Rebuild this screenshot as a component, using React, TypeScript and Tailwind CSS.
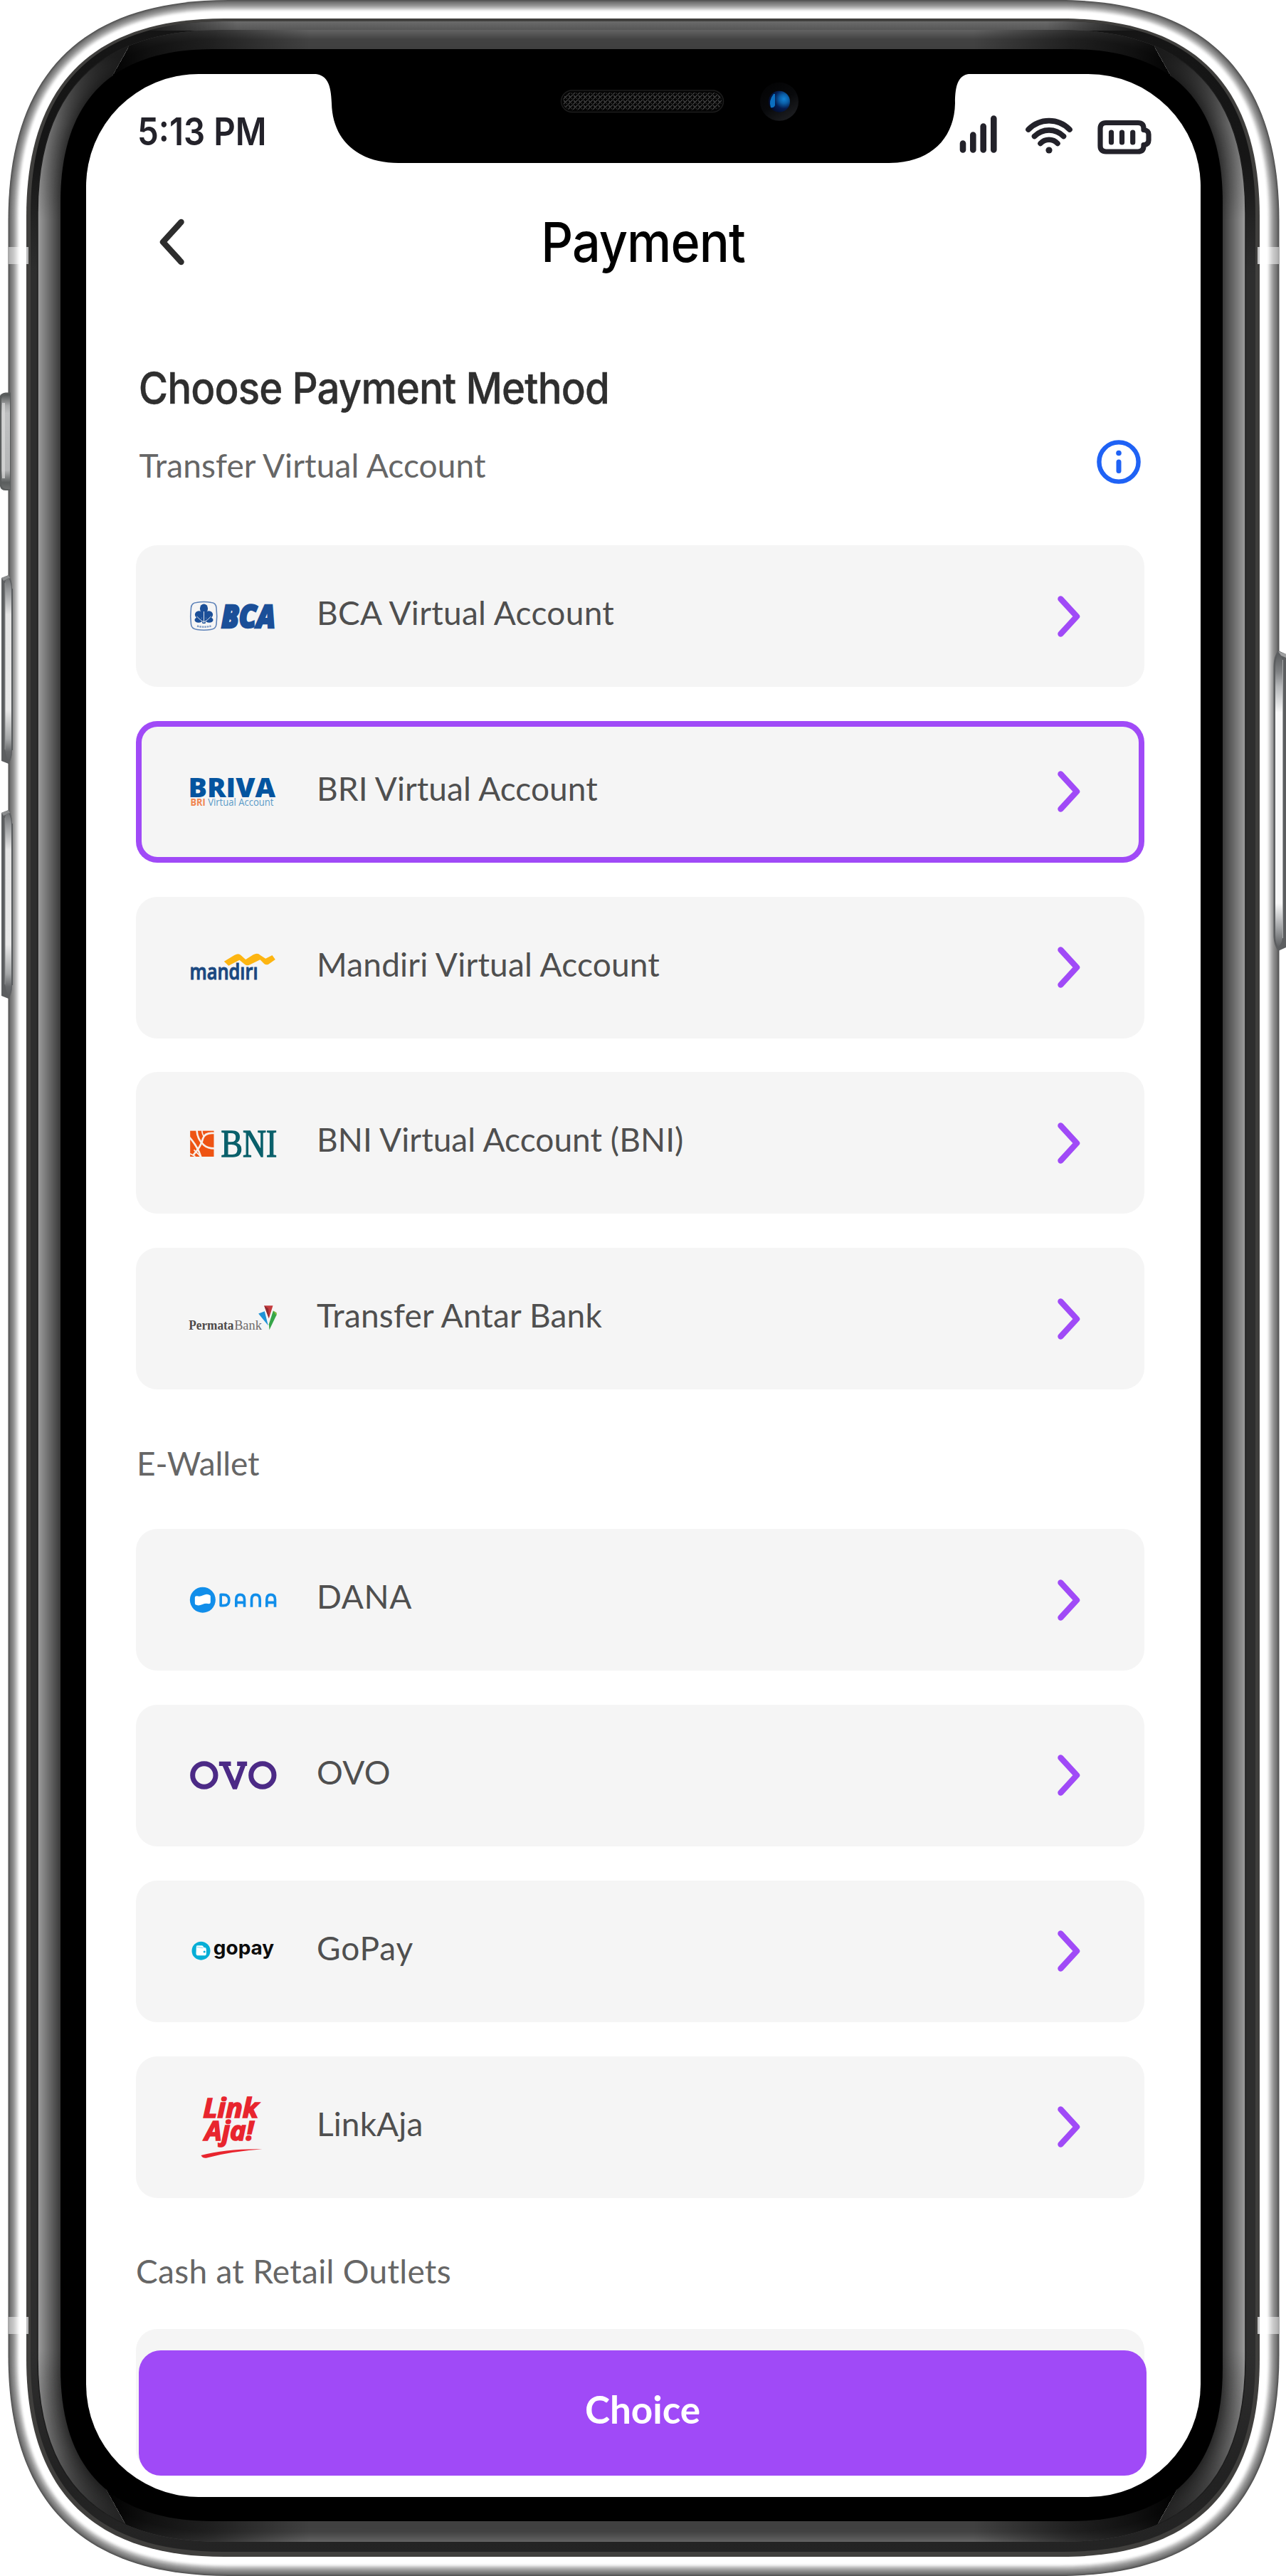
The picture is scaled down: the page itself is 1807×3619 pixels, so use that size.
import React from 'react';
import type { ReactNode } from 'react';

/* ---------- Device frame ---------- */

type Box = { l: number; t: number; r: number; b: number; c: number };

const RIM_OUTER: Box = { l: 11.5, t: 0, r: 1797.5, b: 3619, c: 310 };
const RIM_INNER: Box = { l: 37, t: 26, r: 1770, b: 3592, c: 278 };
const BAND: Box = { l: 43, t: 30, r: 1764, b: 3585, c: 270 };
const BEVEL_OUTER: Box = { l: 53, t: 42, r: 1750, b: 3571, c: 257 };
const BEVEL_INNER: Box = { l: 85, t: 69, r: 1718, b: 3542, c: 215 };

/** Rectangle with continuous (superelliptic) corners. */
function smooth({ l, t, r, b, c }: Box) {
  const k = c * 0.335;
  return [
    `M${l} ${t + c}`,
    `C${l} ${t + k} ${l + k} ${t} ${l + c} ${t}`,
    `H${r - c}`,
    `C${r - k} ${t} ${r} ${t + k} ${r} ${t + c}`,
    `V${b - c}`,
    `C${r} ${b - k} ${r - k} ${b} ${r - c} ${b}`,
    `H${l + c}`,
    `C${l + k} ${b} ${l} ${b - k} ${l} ${b - c}Z`,
  ].join(' ');
}

function mix(a: Box, b: Box, p: number): Box {
  const m = (x: number, y: number) => x + (y - x) * p;
  return { l: m(a.l, b.l), t: m(a.t, b.t), r: m(a.r, b.r), b: m(a.b, b.b), c: m(a.c, b.c) };
}

function tone(stops: [number, number][], p: number) {
  let v = stops[stops.length - 1][1];
  for (let i = 1; i < stops.length; i++) {
    if (p <= stops[i][0]) {
      const [p0, v0] = stops[i - 1];
      const [p1, v1] = stops[i];
      v = v0 + ((v1 - v0) * (p - p0)) / (p1 - p0);
      break;
    }
  }
  const n = Math.round(v);
  return `rgb(${n},${n},${n})`;
}

function Rings({ from, to, n, stops }: { from: Box; to: Box; n: number; stops: [number, number][] }) {
  return (
    <>
      {Array.from({ length: n }, (_, i) => (
        <path key={i} d={smooth(mix(from, to, i / n))} fill={tone(stops, i / (n - 1))} />
      ))}
    </>
  );
}

const SIDE_CLIP = 'M0 0H190L180 67L153 115L125 165L100 300V3320L125 3450L152 3503L176 3546L190 3619H0Z';

function SideBevel() {
  return (
    <g clipPath="url(#side)">
      <Rings from={BEVEL_OUTER} to={BEVEL_INNER} n={32} stops={[[0, 156], [1, 58]]} />
      <g clipPath="url(#bevel)">
        <rect x="40" y="40" width="160" height="270" fill="url(#fadeDown)" />
        <rect x="40" y="3300" width="160" height="280" fill="url(#fadeUp)" />
      </g>
      <path d={smooth(BEVEL_OUTER)} fill="none" stroke="#1c1c1c" strokeWidth="1.5" />
    </g>
  );
}

function VolumeKey({ y }: { y: number }) {
  return (
    <g transform={`translate(0 ${y})`}>
      <path d="M2 5L12 1Q17 8 17 20V247Q17 259 12 266L2 262Z" fill="#5c5e60" />
      <path d="M2 5L12 1L14 5L5 9Z" fill="#8c8e8f" />
      <path d="M7 12Q7 7 12 5Q16 12 16 22V246Q16 256 12 262Q7 252 7 244Z" fill="url(#key)" />
      <path d="M7 12V246" stroke="#8b8d8e" strokeWidth="1" />
      <path d="M17.2 20V247" stroke="#55585a" strokeWidth="1.5" />
    </g>
  );
}

function DeviceFrame() {
  return (
    <svg className="absolute inset-0" width="1807" height="3619" viewBox="0 0 1807 3619">
      <defs>
        <clipPath id="side"><path d={SIDE_CLIP} /></clipPath>
        <clipPath id="band"><path d={smooth(BAND)} /></clipPath>
        <clipPath id="bevel"><path d={smooth(BEVEL_OUTER)} /></clipPath>
        <linearGradient id="fadeDown" x2="0" y2="1">
          <stop offset="0" stopColor="#111" /><stop offset=".15" stopColor="#111" stopOpacity=".9" />
          <stop offset=".5" stopColor="#111" stopOpacity=".35" /><stop offset="1" stopColor="#111" stopOpacity="0" />
        </linearGradient>
        <linearGradient id="fadeUp" x2="0" y2="1">
          <stop offset="0" stopColor="#111" stopOpacity="0" /><stop offset=".5" stopColor="#111" stopOpacity=".4" />
          <stop offset=".85" stopColor="#111" stopOpacity=".85" /><stop offset="1" stopColor="#111" stopOpacity=".9" />
        </linearGradient>
        <linearGradient id="ends" gradientUnits="userSpaceOnUse" x1="150" x2="1653" y1="0" y2="0">
          <stop offset="0" stopColor="#000" /><stop offset=".04" stopColor="#000" stopOpacity=".75" />
          <stop offset=".1" stopColor="#000" stopOpacity=".5" /><stop offset=".19" stopColor="#000" stopOpacity="0" />
          <stop offset=".81" stopColor="#000" stopOpacity="0" /><stop offset=".9" stopColor="#000" stopOpacity=".5" />
          <stop offset=".96" stopColor="#000" stopOpacity=".75" /><stop offset="1" stopColor="#000" />
        </linearGradient>
        <linearGradient id="bandTone" x2="0" y2="1">
          <stop offset="0" stopColor="#151515" /><stop offset=".055" stopColor="#161616" />
          <stop offset=".1" stopColor="#2e2e2e" /><stop offset=".92" stopColor="#2e2e2e" />
          <stop offset=".97" stopColor="#222" /><stop offset="1" stopColor="#242424" />
        </linearGradient>
        <linearGradient id="topLight" x2="0" y2="1">
          <stop offset="0" stopColor="#6b6b6b" /><stop offset="1" stopColor="#545454" />
        </linearGradient>
        <linearGradient id="topMaskTone" gradientUnits="userSpaceOnUse" x1="190" x2="1613" y1="0" y2="0">
          <stop offset="0" stopColor="#000" /><stop offset=".1" stopColor="#fff" />
          <stop offset=".9" stopColor="#fff" /><stop offset="1" stopColor="#000" />
        </linearGradient>
        <mask id="topMask" maskUnits="userSpaceOnUse" x="0" y="0" width="1807" height="100">
          <rect width="1807" height="100" fill="url(#topMaskTone)" />
        </mask>
        <linearGradient id="key" x2="0" y2="1">
          <stop offset="0" stopColor="#6c6e70" /><stop offset=".06" stopColor="#939597" />
          <stop offset=".2" stopColor="#e4e4e4" /><stop offset=".72" stopColor="#e8e8e8" />
          <stop offset=".88" stopColor="#a4a6a7" /><stop offset=".95" stopColor="#66686a" /><stop offset="1" stopColor="#5c5e60" />
        </linearGradient>
        <linearGradient id="mute" x2="0" y2="1">
          <stop offset="0" stopColor="#515454" /><stop offset=".12" stopColor="#a8a9aa" /><stop offset=".2" stopColor="#bfc0c1" />
          <stop offset=".8" stopColor="#b5b6b7" /><stop offset=".93" stopColor="#5a5d5d" /><stop offset="1" stopColor="#6b6d6d" />
        </linearGradient>
        <linearGradient id="power" x2="0" y2="1">
          <stop offset="0" stopColor="#5c5e60" /><stop offset=".06" stopColor="#808284" /><stop offset=".11" stopColor="#b5b7b9" />
          <stop offset=".2" stopColor="#f8f8f8" /><stop offset=".85" stopColor="#f8f8f8" /><stop offset=".93" stopColor="#a5a7a9" />
          <stop offset="1" stopColor="#5c5e60" />
        </linearGradient>
      </defs>

      {/* metal rim */}
      <Rings from={RIM_OUTER} to={RIM_INNER} n={26} stops={[[0, 82], [0.1, 112], [0.3, 150], [0.45, 195], [0.58, 242], [0.66, 255], [1, 255]]} />
      <path d={smooth(RIM_INNER)} fill="#403f3d" />
      <path d={smooth(BAND)} fill="url(#bandTone)" />
      <g clipPath="url(#band)">
        <rect x="180" y="30" width="1443" height="13" fill="url(#topLight)" mask="url(#topMask)" />
      </g>

      {/* top and bottom bevel */}
      <Rings from={BEVEL_OUTER} to={BEVEL_INNER} n={27} stops={[[0, 98], [0.5, 66], [1, 64]]} />
      <path d={smooth(BEVEL_OUTER)} fill="url(#ends)" />
      <SideBevel />
      <g transform="translate(1803 0) scale(-1 1)"><SideBevel /></g>
      <path d={smooth(BEVEL_INNER)} fill="#000" />

      {/* antenna lines */}
      {[347, 3255].map((y) => (
        <g key={y} fill="#fff">
          <rect x="12" y={y} width="25" height="24" fillOpacity=".5" />
          <rect x="37" y={y} width="3" height="24" fill="#b9b9b9" />
          <rect x="1770" y={y} width="27" height="24" fillOpacity=".5" />
          <rect x="1767" y={y} width="3" height="24" fill="#c6c6c6" />
        </g>
      ))}

      {/* mute switch */}
      <path d="M0 556Q2 552 8 551.5H15V689H8Q1 689 0 683Z" fill="#5a5d5d" />
      <path d="M2 560Q4 555 8 554H14V687H8Q3 686 2 681Z" fill="url(#mute)" />
      <path d="M3 566H7V672H3Z" fill="#dadada" fillOpacity=".7" />

      <VolumeKey y={807} />
      <VolumeKey y={1137} />

      {/* power key */}
      <path d="M1807 919L1796 914Q1789.500 922 1789.500 936V1316Q1790 1328 1796 1336L1807 1331Z" fill="#5c5e60" />
      <path d="M1796 915L1807 919V924L1800 921Z" fill="#a0a1a2" />
      <path d="M1802 927Q1800 920 1796 919Q1792 926 1792 938V1314Q1792 1325 1796 1331Q1801 1326 1802 1318Z" fill="url(#power)" />
      <path d="M1802.500 927V1318" stroke="#a5a7a8" />
    </svg>
  );
}

function Notch() {
  return (
    <svg className="absolute left-0 top-0" width="1807" height="240" viewBox="0 0 1807 240">
      <defs>
        <pattern id="mesh" width="7" height="7" patternUnits="userSpaceOnUse">
          <path d="M0 7L7 0M1 1L3 3" stroke="#4c4c4c" strokeWidth="1.1" />
          <path d="M4.500 4.500L6 6" stroke="#333" strokeWidth="1.1" />
        </pattern>
        <radialGradient id="lens" cx=".72" cy=".38" r=".75">
          <stop offset="0" stopColor="#1283d6" /><stop offset=".28" stopColor="#0b5fa8" />
          <stop offset=".6" stopColor="#041c50" /><stop offset="1" stopColor="#020b2b" />
        </radialGradient>
        <linearGradient id="housing" x1="0" y1="0" x2=".6" y2="1">
          <stop offset="0" stopColor="#020203" /><stop offset=".6" stopColor="#08090b" /><stop offset="1" stopColor="#1b1c1f" />
        </linearGradient>
      </defs>
      <path d="M430 90V103.500H438C460 103.500 465 118 466 145C467 196 502 229 560 229H1249C1306 229 1341 196 1342 145C1342 118 1347 103.500 1366 103.500H1375V90Z" fill="#000" />
      <rect x="788.500" y="127" width="228" height="30.500" rx="15.250" fill="#050505" stroke="#1d1d1d" strokeWidth="1.500" />
      <rect x="791" y="130" width="223" height="24.500" rx="12.250" fill="url(#mesh)" />
      <circle cx="1095" cy="142.700" r="27" fill="url(#housing)" />
      <circle cx="1095" cy="142.700" r="15" fill="url(#lens)" />
      <path d="M1087 132Q1079.500 142 1083 151Q1087 152 1089 148V132Z" fill="#0b6fc0" />
    </svg>
  );
}

/* ---------- Status bar ---------- */

function SignalIcon() {
  return (
    <svg width="54" height="54" viewBox="0 0 54 54" stroke="#23222a" strokeWidth="8.600" strokeLinecap="round">
      <path d="M5 39.500V48.500M19.300 27.500V48.500M33.700 15.500V48.500M48.300 4.500V48.500" />
    </svg>
  );
}

function WifiIcon() {
  return (
    <svg width="66" height="54" viewBox="0 0 66 54" fill="none" stroke="#23222a" strokeWidth="7.600" strokeLinecap="round">
      <path d="M4 20C20 3.500 46 3.500 62 20" />
      <path d="M12.500 29.500C24 18 42 18 53.500 29.500" />
      <path d="M21 39.500C27.500 32.500 38.500 32.500 45 39.500" />
      <circle cx="33" cy="49" r="4.600" fill="#23222a" stroke="none" />
    </svg>
  );
}

function BatteryIcon() {
  return (
    <svg width="76" height="50" viewBox="0 0 76 50" fill="none" stroke="#23222a" strokeWidth="7.200" strokeLinecap="round" strokeLinejoin="round">
      <path d="M12 4.500H57Q65 4.500 65 12.500V14.500Q72 15 72 21V29Q72 35 65 35.500V37Q65 45 57 45H12Q4 45 4 37V12.500Q4 4.500 12 4.500Z" />
      <path d="M19.500 18V32M34.500 18V32M49.700 18V32" />
    </svg>
  );
}

function StatusBar() {
  return (
    <div className="flex h-[125px] items-start justify-between pl-[72px] pr-[69px] pt-[55px]">
      <span className="w-[190px] origin-left scale-x-[0.895] whitespace-nowrap font-['Inter'] text-[53px] font-semibold leading-none text-[#23222a]">
        5:13 PM
      </span>
      <div className="flex items-start">
        <div className="mr-[39px] mt-[3px]"><SignalIcon /></div>
        <div className="mr-[35px] mt-[3px]"><WifiIcon /></div>
        <div className="mt-[9px]"><BatteryIcon /></div>
      </div>
    </div>
  );
}

/* ---------- Logos ---------- */

function Logo({ y, children }: { y?: number; children: ReactNode }) {
  return (
    <svg className="shrink-0 overflow-visible" width="122" height="100" viewBox="0 0 122 100">
      {y === undefined ? children : <g transform={`translate(-16.500 ${y}) scale(.33333)`}>{children}</g>}
    </svg>
  );
}

function BcaLogo() {
  return (
    <Logo>
      <g fill="#1b4f98">
        <path d="M9 30.500Q19.500 28.500 30 30.500Q36.500 31 37 38Q38.500 50 37 61Q36.500 67.500 29 68.500Q19.500 70 10 68.500Q2 67.500 1.500 61Q0 50 1.500 38Q2 31 9 30.500Z" fill="none" stroke="#5d82b8" strokeWidth="1.600" />
        <ellipse cx="19.500" cy="39" rx="5.600" ry="6.600" />
        <ellipse cx="12.500" cy="47.500" rx="5.600" ry="5.200" />
        <ellipse cx="26.500" cy="47.500" rx="5.600" ry="5.200" />
        <ellipse cx="12" cy="55" rx="5.500" ry="3.800" />
        <ellipse cx="27" cy="55" rx="5.500" ry="3.800" />
        <path d="M15 44H24L21.500 60H17.500Z" />
        <path d="M19.500 43V59M19.500 58Q14 55 9.500 50M19.500 58Q25 55 29.500 50" stroke="#f5f5f5" strokeWidth=".9" fill="none" />
        <path d="M10 63.500Q19.500 66 29.500 63.500" stroke="#7e9cc6" strokeWidth="2.400" strokeDasharray="2.500 1" fill="none" />
        <text x="44" y="66" fontFamily="Open Sans" fontWeight="800" fontStyle="italic" fontSize="44" textLength="76" lengthAdjust="spacingAndGlyphs" stroke="#1b4f98" strokeWidth="2.600">BCA</text>
      </g>
    </Logo>
  );
}

function BrivaLogo() {
  return (
    <Logo y={8}>
      <text x="42" y="149" fontFamily="Open Sans" fontWeight="800" fontSize="113" textLength="368" lengthAdjust="spacingAndGlyphs" fill="#04549f">BRIVA</text>
      <text x="51" y="186" fontFamily="Open Sans" fontWeight="700" fontSize="44" textLength="64" lengthAdjust="spacingAndGlyphs" fill="#f08550">BRI</text>
      <text x="125" y="186" fontFamily="Open Sans" fontSize="44" textLength="277" lengthAdjust="spacingAndGlyphs" fill="#5b9bc8">Virtual Account</text>
    </Logo>
  );
}

function MandiriLogo() {
  return (
    <Logo y={11}>
      <path d="M193 92L236 66Q254 56 264 66L284 84L316 64Q334 54 346 66L368 80L396 66L409 84L380 104Q370 109 362 102L345 85L302 106Q290 112 280 104L258 86L212 110Z" fill="#fdb511" />
      <text x="48" y="168" fontFamily="Open Sans" fontWeight="600" fontSize="90" textLength="288" lengthAdjust="spacingAndGlyphs" fill="#1a4880" stroke="#1a4880" strokeWidth="3">mandırı</text>
    </Logo>
  );
}

function BniLogo() {
  return (
    <Logo y={4}>
      <rect x="50" y="86" width="100" height="109" fill="#ee5413" />
      <g fill="none" stroke="#f7efe9" strokeWidth="8">
        <path d="M46 112Q72 140 88 176L96 198" />
        <path d="M78 84Q80 122 108 146Q124 160 152 160" />
        <path d="M152 96Q112 92 104 118Q98 150 62 190" />
        <path d="M100 84Q100 100 110 112" strokeWidth="5" />
        <path d="M50 182L72 194M66 166L96 196" strokeWidth="5" />
      </g>
      <text x="180" y="195" fontFamily="Liberation Serif" fontSize="164" textLength="236" lengthAdjust="spacingAndGlyphs" fill="#0a606b" stroke="#0a606b" strokeWidth="4">BNI</text>
    </Logo>
  );
}

function PermataLogo() {
  return (
    <Logo y={-242.8}>
      <text x="44" y="924" fontFamily="Liberation Serif" fontWeight="700" fontSize="56" textLength="190" lengthAdjust="spacingAndGlyphs" fill="#4e4a4a">Permata</text>
      <text x="236" y="924" fontFamily="Liberation Serif" fontSize="56" textLength="116" lengthAdjust="spacingAndGlyphs" fill="#6f6b6b">Bank</text>
      <path d="M362 822H399L382 876Z" fill="#c43a3d" />
      <path d="M362 822L382 876L380 835Z" fill="#8f2a30" />
      <path d="M338 856L364 846L379 906Z" fill="#1f93d6" />
      <path d="M400 844L414 852V862L384 924L382 900Z" fill="#35a548" />
      <path d="M400 844L414 852V864Z" fill="#8bbf3a" />
    </Logo>
  );
}

function DanaLogo() {
  return (
    <Logo y={3}>
      <circle cx="103" cy="140" r="54" fill="#118eea" />
      <path d="M70 130Q70 122 80 124Q92 127 104 121Q122 112 134 121Q137 123 136 130V150Q136 158 126 156Q114 153 102 159Q84 167 72 160Q70 158 70 152Z" fill="#fff" />
      <g fill="none" stroke="#118eea" strokeWidth="11" strokeLinejoin="round">
        <path d="M179 118H190Q214 118 214 141Q214 164 190 164H179Z" />
        <path d="M244 170V138Q244 118 261 118Q279 118 279 138V170M244 151H279" />
        <path d="M309 170V138Q309 118 326 118Q344 118 344 138V170" />
        <path d="M373 170V138Q373 118 390 118Q408 118 408 138V170M373 151H408" />
      </g>
    </Logo>
  );
}

function OvoLogo() {
  return (
    <Logo y={-244}>
      <g fill="none" stroke="#4c2a86" strokeWidth="21">
        <circle cx="109" cy="882" r="48.500" />
        <circle cx="355" cy="882" r="48.500" />
      </g>
      <path d="M172 824H222V843H210L238 906L262 843H248V824H290V843H283L247 941H230L187 843H172Z" fill="#4c2a86" />
    </Logo>
  );
}

function GopayLogo() {
  return (
    <Logo y={9}>
      <circle cx="96" cy="122" r="39" fill="#07aed6" />
      <path d="M76 104Q76 100 82 100H100Q106 100 107 108H112Q118 109 118 116V134Q118 142 110 142H84Q76 142 75 134Z" fill="#fff" />
      <path d="M78 106L104 110" stroke="#7dd3e8" strokeWidth="3" />
      <circle cx="110" cy="126" r="4.500" fill="#07aed6" />
      <text x="148" y="139" fontFamily="Inter" fontWeight="700" fontSize="82" textLength="256" lengthAdjust="spacingAndGlyphs" fill="#0c0c0c">gopay</text>
    </Logo>
  );
}

function LinkAjaLogo() {
  return (
    <Logo y={-238}>
      <g fontFamily="Open Sans" fontWeight="700" fontStyle="italic" fill="#e8252e" stroke="#e8252e" strokeWidth="5">
        <text x="104" y="825" fontSize="114" textLength="234" lengthAdjust="spacingAndGlyphs">Link</text>
        <text x="112" y="922" fontSize="112" textLength="206" lengthAdjust="spacingAndGlyphs">Aja!</text>
      </g>
      <path d="M96 984Q200 956 354 958Q220 968 118 995Q104 998 96 984Z" fill="#e8252e" />
    </Logo>
  );
}

/* ---------- Payment list ---------- */

type Method = { label: string; logo: ReactNode; tracking: string; selected?: boolean };

const banks: Method[] = [
  { label: 'BCA Virtual Account', logo: <BcaLogo />, tracking: 'tracking-[0.3px]' },
  { label: 'BRI Virtual Account', logo: <BrivaLogo />, tracking: 'tracking-[0.05px]', selected: true },
  { label: 'Mandiri Virtual Account', logo: <MandiriLogo />, tracking: 'tracking-[0.2px]' },
  { label: 'BNI Virtual Account (BNI)', logo: <BniLogo />, tracking: 'tracking-[0.05px]' },
  { label: 'Transfer Antar Bank', logo: <PermataLogo />, tracking: 'tracking-[0.2px]' },
];

const wallets: Method[] = [
  { label: 'DANA', logo: <DanaLogo />, tracking: 'tracking-[0.6px]' },
  { label: 'OVO', logo: <OvoLogo />, tracking: 'tracking-[0.3px]' },
  { label: 'GoPay', logo: <GopayLogo />, tracking: 'tracking-[0.9px]' },
  { label: 'LinkAja', logo: <LinkAjaLogo />, tracking: 'tracking-[0.1px]' },
];

function MethodCard({ label, logo, tracking, selected }: Method) {
  return (
    <button
      className={`flex h-[199px] w-full shrink-0 items-center rounded-[30px] bg-[#f5f5f5] pl-[76px] pr-[90px] text-left ${
        selected ? 'ring-8 ring-inset ring-[#a04af7]' : ''
      }`}
    >
      {logo}
      <span className={`ml-[56px] grow pb-[9px] font-['Lato'] text-[46px] leading-none text-[#4f4f4f] ${tracking}`}>{label}</span>
      <svg width="32" height="58" viewBox="0 0 32 58" fill="none" stroke="#a04af7" strokeWidth="8.500" strokeLinecap="round" strokeLinejoin="round">
        <path d="M4.500 4.500L27 29L4.500 53.500" />
      </svg>
    </button>
  );
}

function MethodList({ items }: { items: Method[] }) {
  return (
    <div className="flex flex-col gap-[47.8px]">
      {items.map((m) => (
        <MethodCard key={m.label} {...m} />
      ))}
    </div>
  );
}

export default function App() {
  return (
    <div className="relative h-[3619px] w-[1807px] overflow-hidden bg-white pl-[120.5px] pt-[104px]">
      <DeviceFrame />

      <main className="relative flex h-[3403.5px] w-[1566.5px] flex-col overflow-hidden rounded-[158px] bg-white">
        <StatusBar />

        <header className="relative flex h-[228px] items-start justify-center pt-[73px]">
          <svg className="absolute left-[103px] top-[78px]" width="36" height="66" viewBox="0 0 36 66" fill="none" stroke="#2d2d2d" strokeWidth="8.500" strokeLinecap="round" strokeLinejoin="round">
            <path d="M30.500 5L5 33L30.500 61" />
          </svg>
          <h1 className="scale-x-[0.91] font-['Inter'] text-[77px] font-medium leading-none tracking-[-1px] text-black">Payment</h1>
        </header>

        <div className="flex flex-col pl-[70.5px] pr-[79px] pt-[58px]">
          <h2 className="origin-left scale-x-[0.926] whitespace-nowrap pl-[4px] font-['Inter'] text-[61px] font-medium leading-none tracking-[-1px] text-[#2f2f2f] [-webkit-text-stroke:0.4px_#2f2f2f]">
            Choose Payment Method
          </h2>

          <div className="mb-[85px] mt-[40px] flex h-[65px] items-center justify-between pl-[4.5px] pr-[5px]">
            <span className="pt-[11px] font-['Lato'] text-[46px] leading-none tracking-[0.1px] text-[#666]">Transfer Virtual Account</span>
            <svg width="62" height="64" viewBox="0 0 62 64" fill="none" stroke="#1f62f5" strokeWidth="6.400" strokeLinecap="round">
              <circle cx="31" cy="32" r="27.600" />
              <path d="M31 32V44.500" strokeWidth="7" />
              <circle cx="31" cy="19.500" r="3.800" fill="#1f62f5" stroke="none" />
            </svg>
          </div>

          <MethodList items={banks} />

          <h3 className="mb-[69px] mt-[81px] pl-[1px] font-['Lato'] text-[46px] leading-none tracking-[-0.1px] text-[#666]">E-Wallet</h3>
          <MethodList items={wallets} />

          <h3 className="mb-[58px] mt-[80px] font-['Lato'] text-[46px] leading-none tracking-[0.3px] text-[#666]">Cash at Retail Outlets</h3>
          <div className="h-[199px] rounded-[30px] bg-[#f5f5f5]" />
        </div>

        <button className="absolute bottom-[29.500px] left-[74.500px] flex h-[176px] w-[1416px] items-center justify-center rounded-[31px] bg-[#a04af7] pb-[11px] font-['Lato'] text-[53px] font-bold leading-none text-white">
          Choice
        </button>
      </main>

      <Notch />
    </div>
  );
}
